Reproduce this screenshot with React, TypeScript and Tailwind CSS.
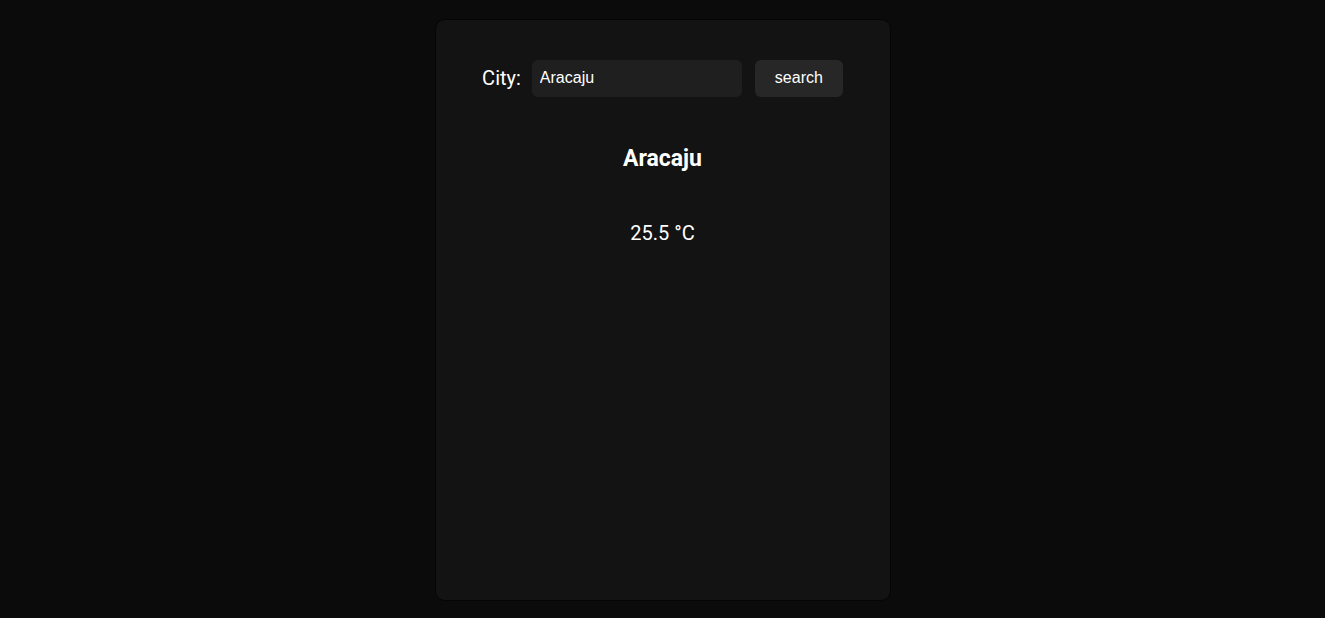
import { useState } from "react";

export default function App() {
  const [city, setCity] = useState("Aracaju");

  return (
    <div className="min-h-screen bg-[#0b0b0b] flex justify-center pt-[19px] font-['Roboto',sans-serif] text-white">
      <div className="w-[456px] h-[582px] bg-[#131313] border border-[#050505] rounded-[10px] flex flex-col items-center pt-[40px]">
        {/* search form */}
        <div className="flex items-center">
          <label className="text-[20px] leading-[37px] mr-[11px]">City:</label>
          <input
            value={city}
            onChange={(e) => setCity(e.target.value)}
            className="w-[210px] h-[37px] bg-[#1f1f1f] rounded-md px-2 pb-px text-[16px] font-['Liberation_Sans',sans-serif] text-white outline-none"
          />
          <button className="ml-[13px] h-[37px] px-5 pb-px bg-[#272727] rounded-md text-[16px] font-['Liberation_Sans',sans-serif]">
            search
          </button>
        </div>

        {/* result */}
        <h2 className="mt-[48px] text-[23px] font-bold leading-[28px]">Aracaju</h2>
        <p className="mt-[48px] text-[20px] leading-[24px]">25.5 °C</p>
      </div>
    </div>
  );
}
